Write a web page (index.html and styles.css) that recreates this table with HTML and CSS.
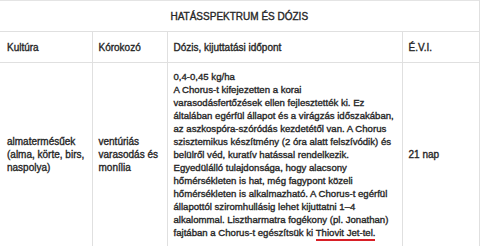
FILE: index.html
```html
<!DOCTYPE html>
<html lang="hu">
<head>
<meta charset="utf-8">
<title>Hatásspektrum és dózis</title>
<link rel="stylesheet" href="styles.css">
</head>
<body>
<table class="spec">
  <colgroup>
    <col class="c1"><col class="c2"><col class="c3"><col class="c4">
  </colgroup>
  <thead>
    <tr><th class="title" colspan="4">HATÁSSPEKTRUM ÉS DÓZIS</th></tr>
    <tr class="head">
      <th>Kultúra</th><th>Kórokozó</th><th>Dózis, kijuttatási időpont</th><th>É.V.I.</th>
    </tr>
  </thead>
  <tbody>
    <tr>
      <td>almatermésűek (alma, körte, birs, naspolya)</td>
      <td>ventúriás varasodás és monília</td>
      <td class="dose">0,4-0,45 kg/ha<br>A Chorus-t kifejezetten a korai<br>varasodásfertőzések ellen fejlesztették ki. Ez<br>általában egérfül állapot és a virágzás időszakában,<br>az aszkospóra-szóródás kezdetétől van. A Chorus<br>szisztemikus készítmény (2 óra alatt felszívódik) és<br>belülről véd, kuratív hatással rendelkezik.<br>Egyedülálló tulajdonsága, hogy alacsony<br>hőmérsékleten is hat, még fagypont közeli<br>hőmérsékleten is alkalmazható. A Chorus-t egérfül<br>állapottól sziromhullásig lehet kijuttatni 1–4<br>alkalommal. Lisztharmatra fogékony (pl. Jonathan)<br>fajtában a Chorus-t egészítsük ki <a class="link" href="#">Thiovit Jet-tel.</a></td>
      <td>21 nap</td>
    </tr>
  </tbody>
</table>
</body>
</html>
```
FILE: styles.css
```css
html, body {
  margin: 0;
  padding: 0;
  background: #fff;
}
body {
  font-family: "Liberation Sans", Arial, sans-serif;
  font-size: 10px;
  line-height: 13px;
  color: #262626;
  font-weight: normal;
  -webkit-text-stroke: 0.35px #262626;
}
.spec {
  width: 479px;
  border-collapse: collapse;
  table-layout: fixed;
  border-top: 1px solid #e4e4e4;
  border-right: 1px solid #e0e0e0;
}
.c1 { width: 92px; }
.c2 { width: 75px; }
.c3 { width: 235px; }
.c4 { width: 77px; }
.spec th, .spec td {
  text-align: left;
  vertical-align: middle;
  padding: 6px 6px 6px 6px;
  font-weight: normal;
}
.spec th:first-child, .spec td:first-child {
  padding-left: 7px;
}
.spec .title {
  text-align: center;
  height: 18px;
  padding: 6px 7px;
  border-bottom: 1px solid #e0e0e0;
}
.head th {
  height: 18px;
  padding-top: 6px;
  padding-bottom: 6px;
  border-bottom: 1px solid #e0e0e0;
  border-left: 1px solid #e0e0e0;
}
.head th:first-child { border-left: none; }
.spec td {
  border-left: 1px solid #e0e0e0;
  padding-top: 7px;
  padding-bottom: 7px;
}
.spec td:first-child { border-left: none; }
.spec .dose {
  font-size: 9.6px;
  line-height: 13px;
  white-space: nowrap;
}
.link {
  color: #262626;
  text-decoration: none;
  padding-bottom: 1px;
  border-bottom: 2px solid #d81f26;
}
```
